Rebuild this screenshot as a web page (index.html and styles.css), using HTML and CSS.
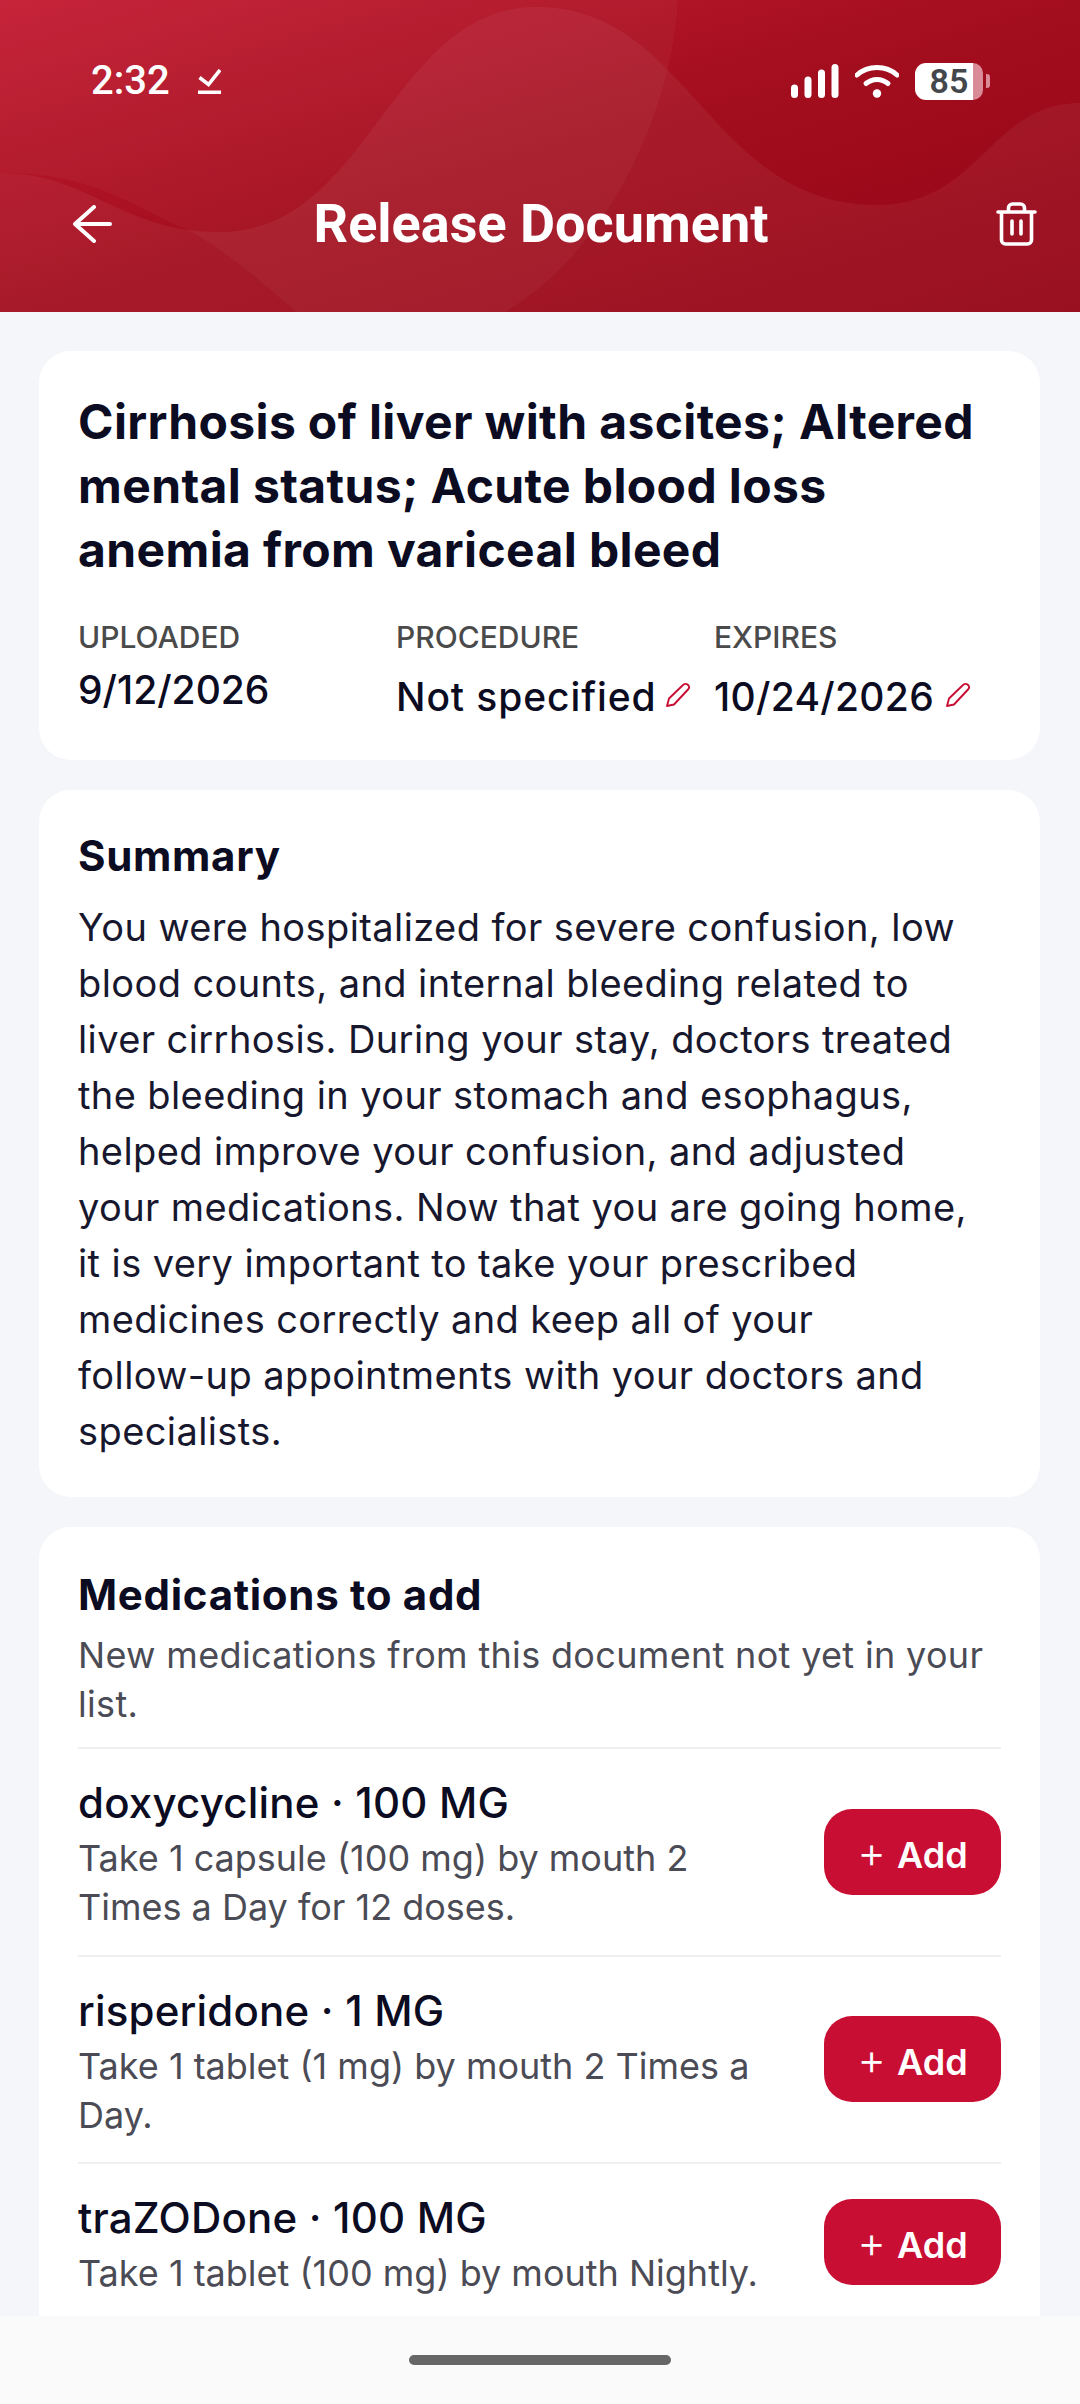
FILE: index.html
```html
<!DOCTYPE html>
<html lang="en">
<head>
<meta charset="utf-8">
<title>Release Document</title>
<link rel="stylesheet" href="styles.css">
</head>
<body>
<div class="screen">
  <header class="hero">
    <svg class="hero-bg" viewBox="0 0 1080 312" preserveAspectRatio="none" aria-hidden="true">
      <defs>
        <linearGradient id="heroGrad" x1="0" y1="0" x2="1" y2="1">
          <stop offset="0" stop-color="#c41c33"/>
          <stop offset="0.5" stop-color="#a30e1e"/>
          <stop offset="1" stop-color="#940416"/>
        </linearGradient>
      </defs>
      <rect width="1080" height="312" fill="url(#heroGrad)"/>
      <path class="wave" d="M0,173 C90,173 120,232 220,232 C370,232 390,7 537,7 C690,7 710,205 877,205 C980,205 990,103 1080,103 L1080,312 L0,312 Z"/>
      <path class="wave wave-b" d="M0,0 L678,0 C672,110 610,250 505,312 L296,312 C262,282 225,250 188,230 C120,200 90,173 0,173 Z"/>
    </svg>
    <div class="status">
      <div class="status-left">
        <span class="time">2:32</span>
        <svg class="tick" viewBox="0 0 23 25"><path d="M1.500 8.500L10.500 15.500L22 1" fill="none" stroke="#fff" stroke-width="3.600"/><rect y="21.500" width="23" height="3.500" fill="#fff"/></svg>
      </div>
      <div class="status-right">
        <svg class="signal" viewBox="0 0 48 34"><g stroke="#fff" stroke-width="7" stroke-linecap="round"><path d="M3.500 24v6.500M17 16v14.500M30.500 9v21.500M44 3.500v27"/></g></svg>
        <svg class="wifi" viewBox="0 0 44 34"><g fill="none" stroke="#fff" stroke-width="5" stroke-linecap="round"><path d="M2 11C13 1 31 1 42 11"/><path d="M11 19.500c6.500-5.500 15.500-5.500 22 0"/></g><circle cx="22" cy="29.500" r="4.200" fill="#fff"/></svg>
        <div class="battery"><span class="battery-fill"><span class="battery-num">85</span></span><span class="battery-rest"></span></div>
        <span class="battery-tip"></span>
      </div>
    </div>
    <div class="nav">
      <svg class="back" viewBox="0 0 39 38"><path d="M37 19H3M21 2L2 19l19 17" fill="none" stroke="#fff" stroke-width="4" stroke-linecap="round" stroke-linejoin="round"/></svg>
      <h1 class="nav-title">Release Document</h1>
      <svg class="trash" viewBox="0 0 41 44"><g fill="none" stroke="#fff" stroke-width="3.600" stroke-linecap="round" stroke-linejoin="round"><path d="M2 10h37M12.500 10V6a4 4 0 0 1 4-4h8a4 4 0 0 1 4 4v4M5.500 10v28a4 4 0 0 0 4 4h22a4 4 0 0 0 4-4V10M16 19v13M25 19v13"/></g></svg>
    </div>
  </header>

  <main class="content">
    <section class="card card-doc">
      <h2 class="doc-title">Cirrhosis of liver with ascites; Altered mental status; Acute blood loss anemia from variceal bleed</h2>
      <div class="meta">
        <div class="meta-col">
          <div class="meta-label">UPLOADED</div>
          <div class="meta-value meta-value-plain">9/12/2026</div>
        </div>
        <div class="meta-col">
          <div class="meta-label">PROCEDURE</div>
          <div class="meta-value"><span class="meta-words">Not specified</span>
            <svg class="pencil" viewBox="0 0 25 25"><path d="M1 24L3 16.500L17 3Q19.500 1 21.500 2.500L22.500 3.500Q24 5.500 22 7.500L8 22.500Z" fill="none" stroke="#c90e33" stroke-width="1.900" stroke-linejoin="round"/></svg>
          </div>
        </div>
        <div class="meta-col">
          <div class="meta-label">EXPIRES</div>
          <div class="meta-value"><span class="meta-date">10/24/2026</span>
            <svg class="pencil" viewBox="0 0 25 25"><path d="M1 24L3 16.500L17 3Q19.500 1 21.500 2.500L22.500 3.500Q24 5.500 22 7.500L8 22.500Z" fill="none" stroke="#c90e33" stroke-width="1.900" stroke-linejoin="round"/></svg>
          </div>
        </div>
      </div>
    </section>

    <section class="card card-summary">
      <h3 class="section-title">Summary</h3>
      <p class="summary-text">You were hospitalized for severe confusion, low blood counts, and internal bleeding related to liver cirrhosis. During your stay, doctors treated the bleeding in your stomach and esophagus, helped improve your confusion, and adjusted your medications. Now that you are going home, it is very important to take your prescribed medicines correctly and keep all of your <span class="nowrap">follow-up</span> appointments with your doctors and specialists.</p>
    </section>

    <section class="card card-meds">
      <h3 class="section-title">Medications to add</h3>
      <p class="meds-intro">New medications from this document not yet in your list.</p>
      <div class="med-row">
        <div class="med-info">
          <div class="med-name">doxycycline · 100 MG</div>
          <div class="med-dir">Take 1 capsule (100 mg) by mouth 2 Times a Day for 12 doses.</div>
        </div>
        <button class="add-btn"><span class="plus">+</span> Add</button>
      </div>
      <div class="med-row">
        <div class="med-info">
          <div class="med-name">risperidone · 1 MG</div>
          <div class="med-dir">Take 1 tablet (1 mg) by mouth 2 Times a Day.</div>
        </div>
        <button class="add-btn"><span class="plus">+</span> Add</button>
      </div>
      <div class="med-row">
        <div class="med-info">
          <div class="med-name">traZODone · 100 MG</div>
          <div class="med-dir">Take 1 tablet (100 mg) by mouth Nightly.</div>
        </div>
        <button class="add-btn"><span class="plus">+</span> Add</button>
      </div>
    </section>
  </main>

  <div class="home-bar"><span class="home-pill"></span></div>
</div>
</body>
</html>
```
FILE: styles.css
```css
* { box-sizing: border-box; }
html, body { margin: 0; padding: 0; }
body {
  width: 1080px;
  height: 2404px;
  overflow: hidden;
  background: #f5f6fa;
  font-family: "Inter", "Noto Sans", sans-serif;
  color: #0b0b22;
}
.screen {
  width: 1080px;
  height: 2404px;
  display: flex;
  flex-direction: column;
  overflow: hidden;
}
.hero {
  position: relative;
  flex: 0 0 312px;
  height: 312px;
  padding: 60px 43px 0 73px;
  display: flex;
  flex-direction: column;
  color: #fff;
  overflow: hidden;
}
.hero-bg { position: absolute; inset: 0; width: 100%; height: 100%; }
.wave { fill: #fff; fill-opacity: 0.05; }
.wave-b { fill-opacity: 0.035; }
.status, .nav { position: relative; display: flex; align-items: center; justify-content: space-between; }
.status { height: 42px; padding: 0 47px 0 18px; }
.status-left { display: flex; align-items: center; gap: 28px; }
.time { font: 500 40px/42px "Roboto", sans-serif; }
.tick { width: 23px; height: 25px; margin-top: 1px; }
.status-right { display: flex; align-items: center; }
.signal { width: 48px; height: 34px; }
.wifi { width: 44px; height: 34px; margin-left: 16px; }
.battery {
  display: flex;
  width: 68px;
  height: 37px;
  margin-left: 16px;
}
.battery-fill {
  flex: 0 0 58px;
  background: #fff;
  border-radius: 11px 0 0 11px;
  display: flex;
  align-items: center;
  justify-content: center;
}
.battery-rest { flex: 1; background: #d98b97; border-radius: 0 11px 11px 0; }
.battery-num { font: 600 34px/37px "Roboto", sans-serif; color: #43474b; padding-left: 10px; }
.battery-tip { width: 4px; height: 14px; margin-left: 3px; background: #d98b97; border-radius: 0 3px 3px 0; }
.nav { margin-top: 100px; height: 44px; }
.back { width: 39px; height: 38px; }
.nav-title { margin: 0 26px 0 0; font: 700 54px/60px "Roboto", sans-serif; color: #fff; }
.trash { width: 41px; height: 44px; }
.content {
  flex: 1;
  min-height: 0;
  overflow: hidden;
  padding: 39px 40px 0 39px;
  display: flex;
  flex-direction: column;
  gap: 30px;
}
.card {
  flex: none;
  background: #fff;
  border-radius: 32px;
  padding: 39px;
}
.card-doc { height: 409px; }
.doc-title { margin: 0; font-size: 48px; line-height: 64px; font-weight: 700; letter-spacing: 0.37px; }
.meta { display: grid; grid-template-columns: repeat(3, 288px); column-gap: 30px; margin-top: 37px; }
.meta-label { font-size: 30px; line-height: 36px; font-weight: 500; color: #4a4a4a; }
.meta-value { font-size: 39px; line-height: 52px; font-weight: 500; white-space: nowrap; margin-top: 16px; display: flex; align-items: center; gap: 12px; }
.meta-words { letter-spacing: 0.9px; margin-right: -3px; }
.meta-date { letter-spacing: 0.3px; }
.meta-value-plain { margin-top: 9px; }
.pencil { width: 25px; height: 25px; margin-top: -6px; flex: none; }
.card-summary { height: 707px; padding-top: 41px; }
.section-title { margin: 0; font-size: 42px; line-height: 50px; font-weight: 700; letter-spacing: 0.7px; }
.summary-text { margin: 18px 0 0; padding-right: 10px; font-size: 38px; line-height: 56px; letter-spacing: 0.4px; color: #17172e; }
.nowrap { white-space: nowrap; }
.card-meds { padding-top: 43px; }
.meds-intro { margin: 11px 0 0; font-size: 36px; line-height: 49px; letter-spacing: 0.33px; color: #4b4b55; padding-bottom: 18px; }
.med-row {
  border-top: 2px solid #f0f0f3;
  display: flex;
  align-items: center;
  justify-content: space-between;
  gap: 32px;
  padding: 22px 0 22.5px;
}
.med-info { flex: 1; min-width: 0; padding-top: 6px; }
.med-name { font-size: 42px; line-height: 52px; font-weight: 500; letter-spacing: 0.2px; }
.med-dir { font-size: 36px; line-height: 49px; color: #4b4b55; margin-top: 5px; }
.add-btn {
  flex: 0 0 177px;
  height: 86px;
  border: 0;
  border-radius: 28px;
  background: #c90e33;
  color: #fff;
  font: 600 36px/86px "Inter", sans-serif;
  padding: 0;
}
.plus { font-size: 44px; font-weight: 300; margin-right: 2px; }
.home-bar {
  flex: 0 0 88px;
  background: #fafafa;
  display: flex;
  justify-content: center;
  padding-top: 39px;
}
.home-pill { width: 262px; height: 10px; border-radius: 5px; background: #666; }
```
